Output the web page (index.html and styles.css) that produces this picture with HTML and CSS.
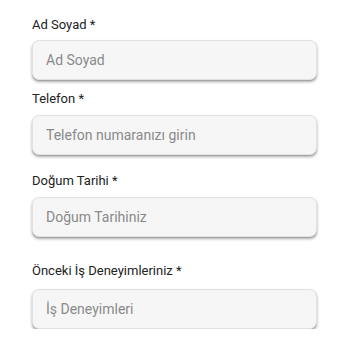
FILE: index.html
```html
<!DOCTYPE html>
<html lang="tr">
<head>
<meta charset="utf-8">
<link rel="stylesheet" href="styles.css">
</head>
<body>
<form class="form">
  <div class="field field-1">
    <label class="label">Ad Soyad *</label>
    <input class="input" type="text" placeholder="Ad Soyad">
  </div>
  <div class="field field-2">
    <label class="label">Telefon *</label>
    <input class="input" type="text" placeholder="Telefon numaranızı girin">
  </div>
  <div class="field field-3">
    <label class="label">Doğum Tarihi *</label>
    <input class="input" type="text" placeholder="Doğum Tarihiniz">
  </div>
  <div class="field field-4">
    <label class="label label-4">Önceki İş Deneyimleriniz *</label>
    <input class="input" type="text" placeholder="İş Deneyimleri">
  </div>
</form>
</body>
</html>
```
FILE: styles.css
```css
html, body {
  margin: 0;
  padding: 0;
  background: #ffffff;
}
.form {
  display: flex;
  flex-direction: column;
  padding: 15px 0 0 32px;
  width: 285px;
  font-family: Roboto, "Noto Sans", sans-serif;
}
.field {
  display: flex;
  flex-direction: column;
  gap: 6px;
}
.field-1 { gap: 5px; }
.field-2 { margin-top: 9px; }
.field-3 { margin-top: 16px; }
.field-4 { margin-top: 24px; gap: 8px; }
.label {
  font-size: 13px;
  line-height: 20px;
  font-weight: 400;
  color: #222222;
}
.input {
  box-sizing: border-box;
  width: 285px;
  height: 40px;
  margin: 0;
  padding: 0 13px;
  border: 1px solid #e2e2e2;
  border-radius: 7px;
  background: #f6f6f6;
  box-shadow: 0 2px 3px rgba(0, 0, 0, 0.32), 0 1px 1px rgba(0, 0, 0, 0.12);
  font-family: Roboto, "Noto Sans", sans-serif;
  font-size: 14px;
  color: #333;
  outline: none;
}
.input::placeholder {
  color: #8a8a8a;
}
```
